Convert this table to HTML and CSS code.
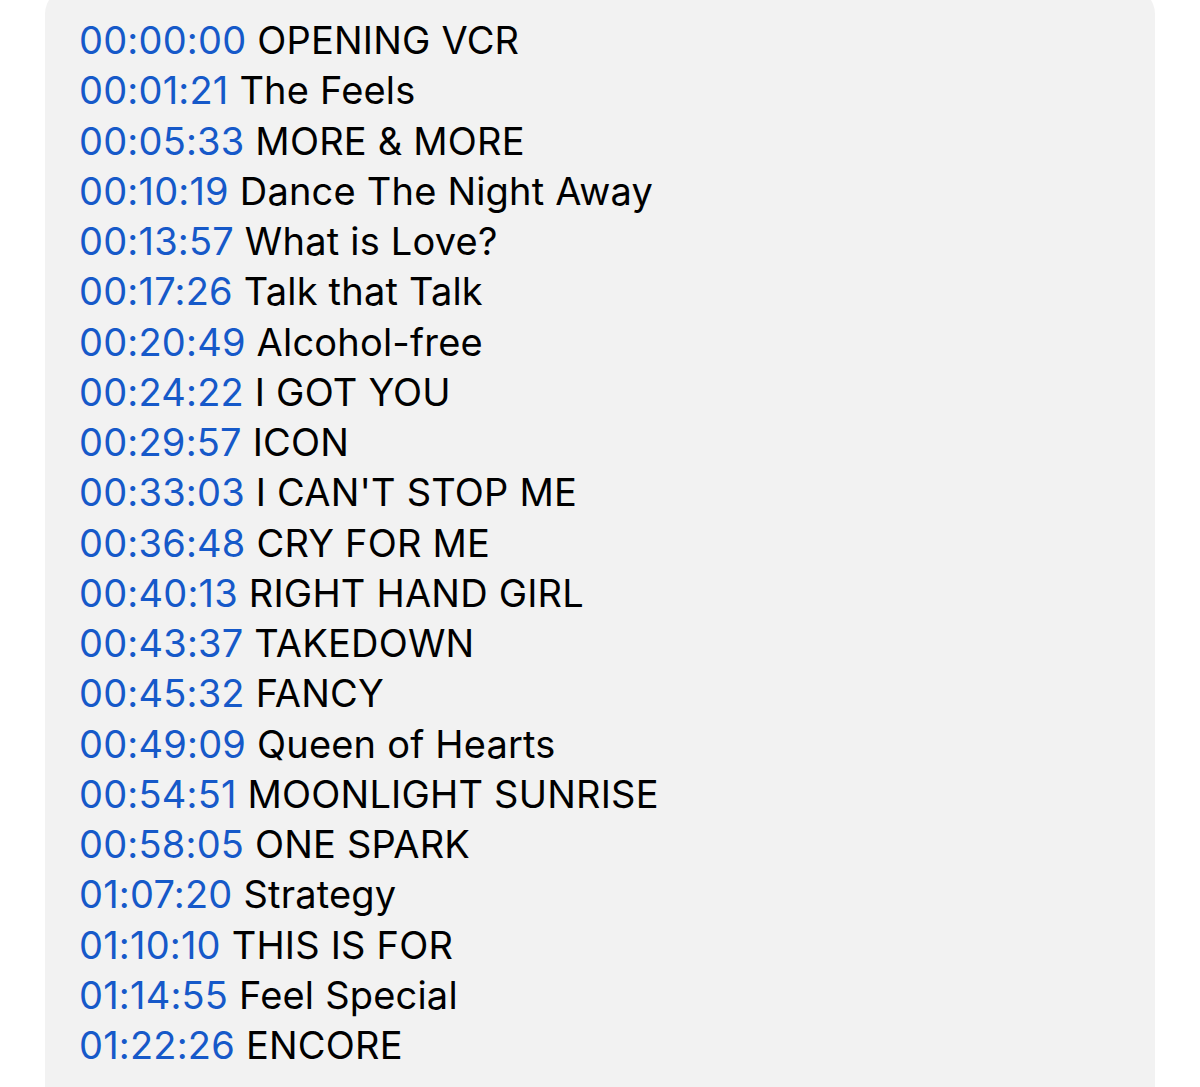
FILE: index.html
```html
<!DOCTYPE html>
<html>
<head>
<meta charset="utf-8">
<link rel="stylesheet" href="styles.css">
</head>
<body>
<div class="panel">
  <div class="row"><span class="ts">00:00:00</span> OPENING VCR</div>
  <div class="row"><span class="ts">00:01:21</span> The Feels</div>
  <div class="row"><span class="ts">00:05:33</span> MORE &amp; MORE</div>
  <div class="row"><span class="ts">00:10:19</span> Dance The Night Away</div>
  <div class="row"><span class="ts">00:13:57</span> What is Love?</div>
  <div class="row"><span class="ts">00:17:26</span> Talk that Talk</div>
  <div class="row"><span class="ts">00:20:49</span> Alcohol-free</div>
  <div class="row"><span class="ts">00:24:22</span> I GOT YOU</div>
  <div class="row"><span class="ts">00:29:57</span> ICON</div>
  <div class="row"><span class="ts">00:33:03</span> I CAN'T STOP ME</div>
  <div class="row"><span class="ts">00:36:48</span> CRY FOR ME</div>
  <div class="row"><span class="ts">00:40:13</span> RIGHT HAND GIRL</div>
  <div class="row"><span class="ts">00:43:37</span> TAKEDOWN</div>
  <div class="row"><span class="ts">00:45:32</span> FANCY</div>
  <div class="row"><span class="ts">00:49:09</span> Queen of Hearts</div>
  <div class="row"><span class="ts">00:54:51</span> MOONLIGHT SUNRISE</div>
  <div class="row"><span class="ts">00:58:05</span> ONE SPARK</div>
  <div class="row"><span class="ts">01:07:20</span> Strategy</div>
  <div class="row"><span class="ts">01:10:10</span> THIS IS FOR</div>
  <div class="row"><span class="ts">01:14:55</span> Feel Special</div>
  <div class="row"><span class="ts">01:22:26</span> ENCORE</div>
</div>
</body>
</html>
```
FILE: styles.css
```css
html, body {
  margin: 0;
  padding: 0;
  background: #ffffff;
}
body {
  overflow: hidden;
  height: 1087px;
}
.panel {
  margin: -12px 45px 0 45px;
  padding: 27px 35px 60px 34px;
  background: #f2f2f2;
  border-radius: 26px;
  font-family: Inter, "Noto Sans", sans-serif;
  font-size: 38px;
  letter-spacing: 0.2px;
  line-height: 50.25px;
  color: #000;
}
.row {
  white-space: nowrap;
}
.ts {
  color: #1659c9;
}
```
